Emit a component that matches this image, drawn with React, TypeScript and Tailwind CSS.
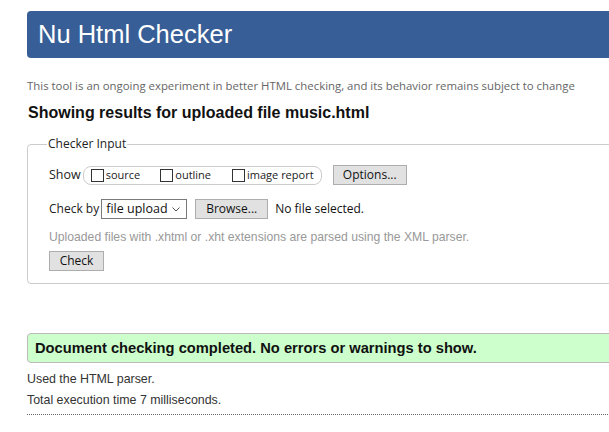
const sans = "font-['Liberation_Sans',Arial,sans-serif]"
const ui = "font-['Open_Sans','Noto_Sans',sans-serif]"

function Box({ label }: { label: string }) {
  return (
    <label className="flex items-center gap-[2px]">
      <span className="h-[13px] w-[13px] border border-[#333] bg-white" />
      <span className="text-[11px] text-[#222]">{label}</span>
    </label>
  )
}

function Btn({ children, className = '' }: { children: React.ReactNode; className?: string }) {
  return (
    <span
      className={`flex h-[20px] items-center justify-center border border-[#adadad] bg-[#e1e1e1] text-[12px] text-[#111] ${className}`}
    >
      {children}
    </span>
  )
}

export default function App() {
  return (
    <div className={`h-[432px] w-[609px] overflow-hidden bg-white ${sans}`}>
      <div className="w-[640px] pl-[27px] pt-[11px]">
        <div className="flex h-[47px] items-center rounded-l-[4px] bg-[#375e96] pl-[11px]">
          <h1 className="text-[25.5px] leading-none text-white">Nu Html Checker</h1>
        </div>

        <p className={`mt-[21px] text-[11.4px] leading-[14px] text-[#666] ${ui}`}>
          This tool is an ongoing experiment in better HTML checking, and its behavior remains subject to change
        </p>
        <h2 className="mt-[11px] pl-px text-[16px] font-bold leading-[18px] text-[#111]">
          Showing results for uploaded file music.html
        </h2>

        <fieldset className={`mt-[13px] h-[149px] rounded-[4px] border border-[#ccc] px-[21px] ${ui}`}>
          <legend className="ml-[-2px] px-px text-[12px] text-[#222]">Checker Input</legend>

          <div className="mt-[12px] flex h-[20px] items-center text-[12.5px] text-[#222]">
            <span>Show</span>
            <div className="ml-[2px] flex h-[19px] w-[239px] items-center rounded-[8px] border border-[#ccc] pl-[7px]">
              <Box label="source" />
              <span className="ml-[20px]" />
              <Box label="outline" />
              <span className="ml-[21px]" />
              <Box label="image report" />
            </div>
            <Btn className="ml-[11px] w-[74px]">Options...</Btn>
          </div>

          <div className="mt-[14px] flex h-[20px] items-center text-[12px] text-[#222]">
            <span>Check by</span>
            <span className="ml-[2px] flex h-[20px] w-[86px] items-center justify-between border border-[#7a7a7a] pl-[4px] pr-[6px] text-[12.5px] text-[#111]">
              file upload
              <svg width="8" height="5" viewBox="0 0 8 5" fill="none" stroke="#555" strokeWidth="1">
                <path d="M0.5 0.5 L4 4 L7.5 0.5" />
              </svg>
            </span>
            <Btn className="ml-[8px] w-[73px]">Browse...</Btn>
            <span className="ml-[7px] text-[12px] text-[#111]">No file selected.</span>
          </div>

          <p className={`mt-[11px] text-[12.2px] leading-[14px] text-[#999] ${sans}`}>
            Uploaded files with .xhtml or .xht extensions are parsed using the XML parser.
          </p>

          <Btn className="mt-[7px] w-[55px]">Check</Btn>
        </fieldset>

        <div className="mt-[49px] flex h-[30px] items-center rounded-[4px] border border-[#bbb] bg-[#ccffcc] pl-[7px]">
          <span className="text-[14.7px] font-bold text-[#111]">
            Document checking completed. No errors or warnings to show.
          </span>
        </div>

        <p className="mt-[9px] text-[12.4px] leading-[14px] text-[#333]">Used the HTML parser.</p>
        <p className="mt-[7px] text-[12.4px] leading-[14px] text-[#333]">Total execution time 7 milliseconds.</p>
        <div className="mt-[7px] border-b border-dotted border-[#666]" />
      </div>
    </div>
  )
}
